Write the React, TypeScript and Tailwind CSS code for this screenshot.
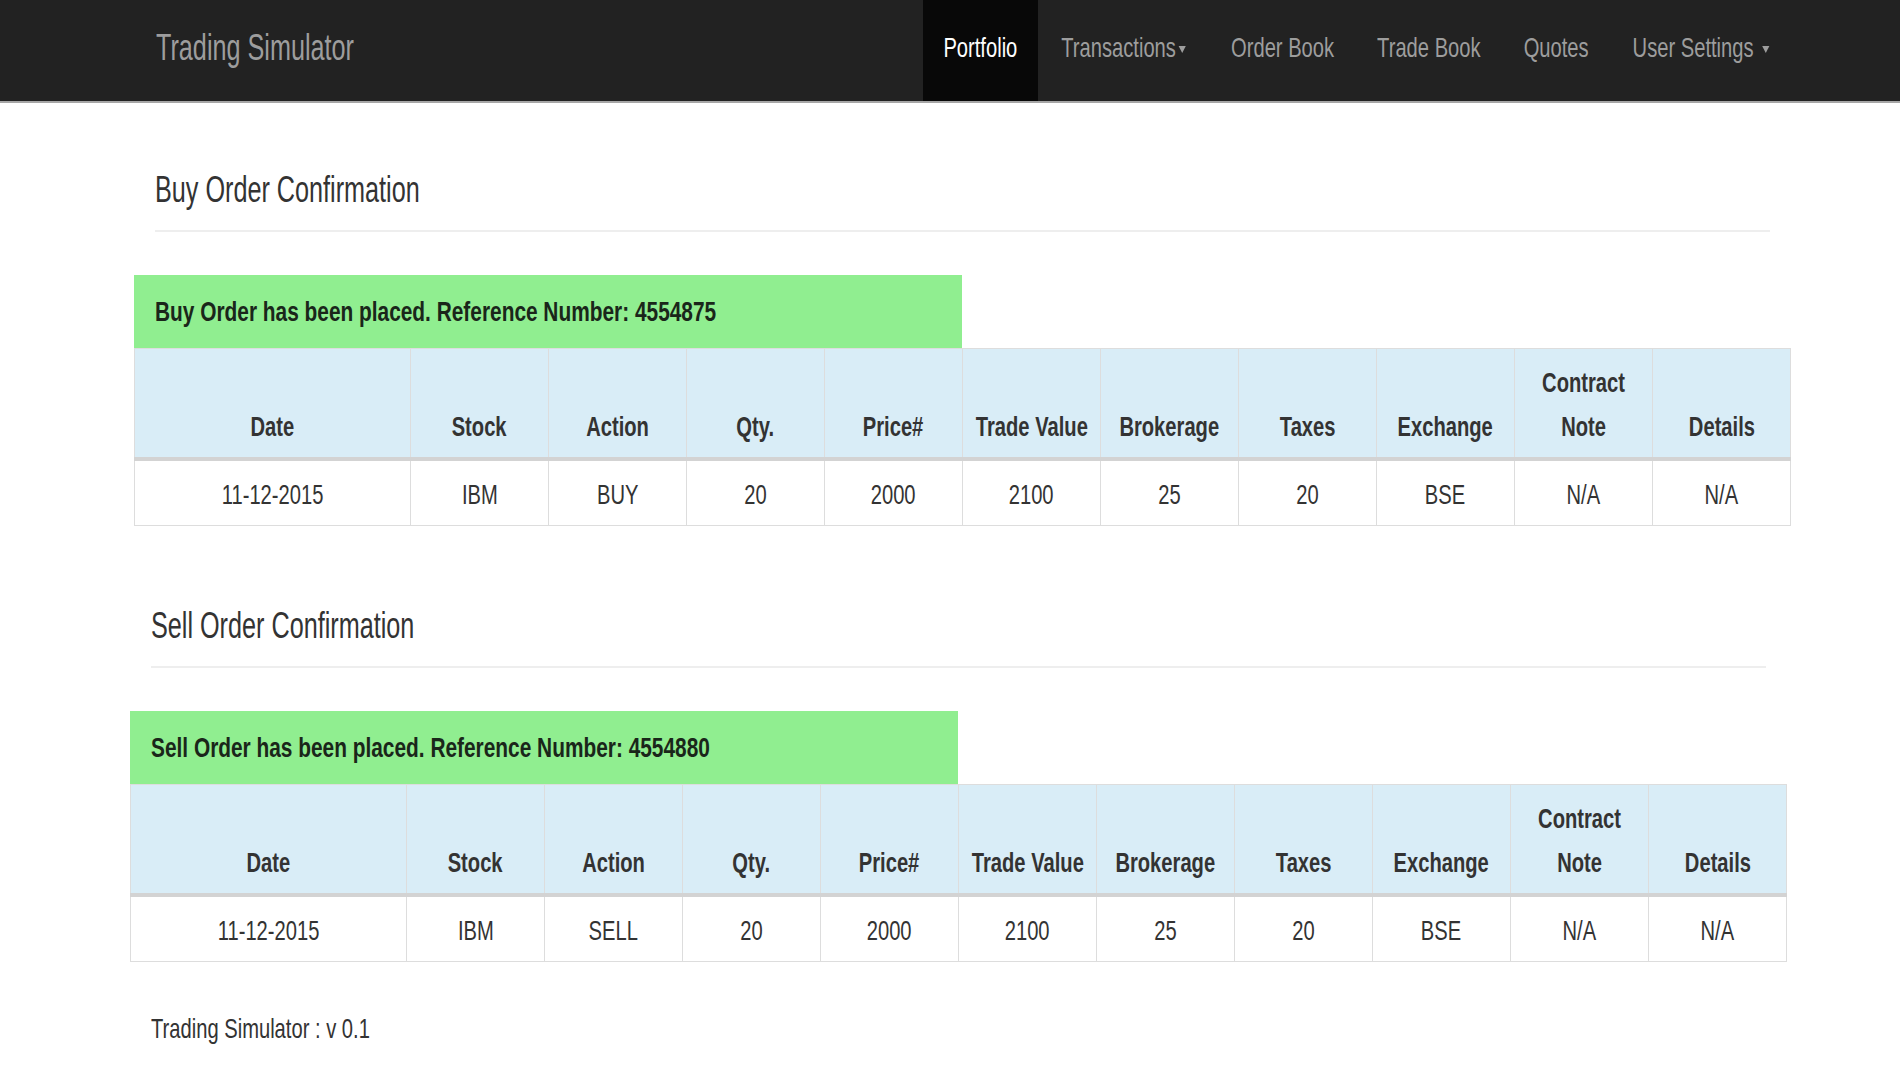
import React from 'react';

// text in the shot is squeezed sideways, so glyphs get a horizontal scale
const Sq = ({ children, className = 'scale-x-[0.72]' }: { children: React.ReactNode; className?: string }) => (
  <span className={`inline-block whitespace-nowrap ${className}`}>{children}</span>
);

const Caret = () => (
  <span className="ml-[4px] inline-block h-0 w-0 border-x-[5px] border-t-[7px] border-x-transparent border-t-current align-middle"></span>
);

const navLinks = [
  { label: 'Portfolio', width: 'w-[115px]', active: true },
  { label: 'Transactions', width: 'w-[172px]', caret: true },
  { label: 'Order Book', width: 'w-[146px]' },
  { label: 'Trade Book', width: 'w-[146px]' },
  { label: 'Quotes', width: 'w-[108px]' },
  { label: 'User Settings', width: 'w-[181px]', caret: true, space: true },
];

const headers = ['Date', 'Stock', 'Action', 'Qty.', 'Price#', 'Trade Value', 'Brokerage', 'Taxes', 'Exchange', 'Contract Note', 'Details'];

const OrderSection = ({ title, message, action, offset }: { title: string; message: string; action: string; offset: string }) => {
  const row = ['11-12-2015', 'IBM', action, '20', '2000', '2100', '25', '20', 'BSE', 'N/A', 'N/A'];

  return (
    <section className={`w-[1657px] ${offset}`}>
      <h4 className="h-[40px] pl-[21px] text-[36px] leading-[40px] text-[#333333]">
        <Sq className="origin-left scale-x-[0.7]">{title}</Sq>
      </h4>
      <div className="mx-[21px] mt-[20px] h-[2px] bg-[#eeeeee]"></div>

      <div className="mt-[43px] flex h-[73px] w-[828px] items-center bg-[#90ee90] pl-[21px] text-[28px] font-bold leading-[40px] text-[#1a261a]">
        <Sq className="origin-left scale-x-[0.745]">{message}</Sq>
      </div>

      <table className="w-[1657px] table-fixed border-collapse border border-[#dddddd]">
        <colgroup>
          <col className="w-[276px]" />
          {headers.slice(1).map((h) => (
            <col key={h} className="w-[138px]" />
          ))}
        </colgroup>
        <thead>
          <tr className="bg-[#d9edf7]">
            {headers.map((h) => (
              <th
                key={h}
                className="border border-b-4 border-[#dddddd] border-b-[#d3d3d3] px-0 pt-[12px] pb-[8px] align-bottom text-[28px] font-bold leading-[44px] text-[#333333]"
              >
                <div className="flex justify-center">
                  {h === 'Contract Note' ? (
                    <Sq className="scale-x-[0.72] text-center">
                      Contract
                      <br />
                      Note
                    </Sq>
                  ) : (
                    <Sq>{h}</Sq>
                  )}
                </div>
              </th>
            ))}
          </tr>
        </thead>
        <tbody>
          <tr>
            {row.map((cell, i) => (
              <td key={i} className="border border-[#dddddd] px-0 pt-[14px] pb-[10px] text-[28px] leading-[40px] text-[#333333]">
                <div className="flex justify-center">
                  <Sq>{cell}</Sq>
                </div>
              </td>
            ))}
          </tr>
        </tbody>
      </table>
    </section>
  );
};

const App = () => {
  return (
    <div className="min-h-screen bg-white font-['Liberation_Sans',Arial,sans-serif]">
      <nav className="h-[103px] border-b-2 border-[#a6a6a6] bg-[#222222]">
        <div className="ml-[134px] flex h-[101px] w-[1657px] items-center justify-between">
          <a className="flex h-full items-center pb-[5px] pl-[22px] text-[36px] leading-[40px] text-[#9d9d9d]">
            <Sq className="origin-left scale-x-[0.7]">Trading Simulator</Sq>
          </a>
          <ul className="flex h-full">
            {navLinks.map((link) => (
              <li key={link.label} className="h-full">
                <a
                  className={`flex h-full items-center justify-center pb-[5px] text-[28px] leading-[40px] ${link.width} ${
                    link.active ? 'bg-[#080808] text-white' : 'text-[#9d9d9d]'
                  }`}
                >
                  <Sq>
                    {link.label}
                    {link.space ? ' ' : ''}
                    {link.caret && <Caret />}
                  </Sq>
                </a>
              </li>
            ))}
          </ul>
        </div>
      </nav>

      <main className="pt-[67px]">
        <OrderSection
          title="Buy Order Confirmation"
          message="Buy Order has been placed. Reference Number: 4554875"
          action="BUY"
          offset="ml-[134px]"
        />
        <div className="h-[80px]"></div>
        <OrderSection
          title="Sell Order Confirmation"
          message="Sell Order has been placed. Reference Number: 4554880"
          action="SELL"
          offset="ml-[130px]"
        />
        <footer className="ml-[130px] mt-[47px] pl-[21px] text-[28px] leading-[40px] text-[#333333]">
          <Sq className="origin-left scale-x-[0.72]">Trading Simulator : v 0.1</Sq>
        </footer>
      </main>
    </div>
  );
};

export default App;
